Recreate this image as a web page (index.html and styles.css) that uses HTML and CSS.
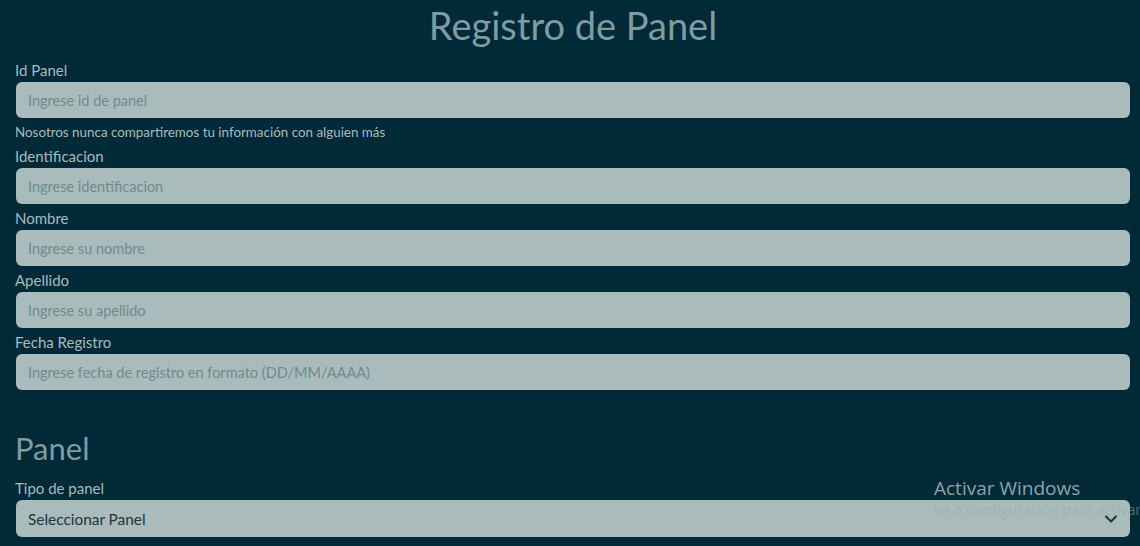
FILE: index.html
```html
<!DOCTYPE html>
<html lang="es">
<head>
<meta charset="utf-8">
<title>Registro de Panel</title>
<link rel="stylesheet" href="styles.css">
</head>
<body>
<main class="container">
  <h1 class="title">Registro de Panel</h1>
  <form class="form">
    <div class="field">
      <label class="label" for="idp">Id Panel</label>
      <input class="control" id="idp" type="text" placeholder="Ingrese id de panel">
      <small class="help">Nosotros nunca compartiremos tu información con alguien más</small>
    </div>
    <div class="field">
      <label class="label" for="ident">Identificacion</label>
      <input class="control" id="ident" type="text" placeholder="Ingrese identificacion">
    </div>
    <div class="field">
      <label class="label" for="nom">Nombre</label>
      <input class="control" id="nom" type="text" placeholder="Ingrese su nombre">
    </div>
    <div class="field">
      <label class="label" for="ape">Apellido</label>
      <input class="control" id="ape" type="text" placeholder="Ingrese su apellido">
    </div>
    <div class="field">
      <label class="label" for="fec">Fecha Registro</label>
      <input class="control" id="fec" type="text" placeholder="Ingrese fecha de registro en formato (DD/MM/AAAA)">
    </div>

    <h2 class="section">Panel</h2>
    <div class="field">
      <label class="label" for="tipo">Tipo de panel</label>
      <div class="select-wrap">
        <select class="control select" id="tipo">
          <option>Seleccionar Panel</option>
        </select>
        <svg class="chevron" width="14" height="10" viewBox="0 0 14 10" aria-hidden="true"><path d="M2 2.5 L7 7.5 L12 2.5" fill="none" stroke="#1d3340" stroke-width="2" stroke-linecap="round" stroke-linejoin="round"/></svg>
      </div>
    </div>
    <div class="field">
      <label class="label" for="marca">Marca</label>
    </div>
  </form>
</main>
<div class="watermark">
  <div class="wm-title">Activar Windows</div>
  <div class="wm-sub">Ve a Configuración para activar Windows.</div>
</div>
</body>
</html>
```
FILE: styles.css
```css
* { box-sizing: border-box; }
html, body {
  margin: 0;
  background: #012a38;
  overflow: hidden;
}
body {
  font-family: Lato, "Open Sans", sans-serif;
  color: #a8bbbc;
  height: 546px;
}
.container {
  padding: 0 10px 0 16px;
}
.title {
  margin: 0;
  height: 56px;
  padding-top: 3px;
  font-weight: 400;
  font-size: 38px;
  line-height: 45px;
  text-align: center;
  color: #7f9ca1;
}
.form {
  display: flex;
  flex-direction: column;
}
.field {
  display: flex;
  flex-direction: column;
}
.label {
  font-size: 15px;
  line-height: 21px;
  padding: 4px 0 1px;
  margin: 0 0 0 -1px;
  height: 26px;
  color: #a9bbbc;
}
.control {
  display: block;
  width: 100%;
  height: 36px;
  border: 0;
  border-radius: 6px;
  background: #a9bcbb;
  padding: 0 12px;
  font-family: inherit;
  font-size: 14.5px;
  color: #1d3340;
  outline: none;
}
.control::placeholder { color: #6d8b90; }
.help {
  font-size: 13.4px;
  line-height: 20px;
  margin: 4px 0 0 -1px;
  color: #a9bbbc;
}
.section {
  margin: 39px 0 0 -1px;
  height: 45px;
  font-weight: 400;
  font-size: 31px;
  line-height: 38px;
  color: #7f9ca1;
}
.select-wrap { position: relative; }
.select {
  appearance: none;
  -webkit-appearance: none;
  height: 37px;
  font-size: 15.4px;
}
.chevron {
  position: absolute;
  right: 12px;
  top: 14px;
}
.watermark {
  position: absolute;
  z-index: 10;
  left: 934px;
  top: 476px;
  white-space: nowrap;
  font-family: "Open Sans", "DejaVu Sans", sans-serif;
  pointer-events: none;
}
.wm-title {
  font-size: 19px;
  line-height: 24px;
  color: #8fa3a6;
}
.wm-sub {
  font-size: 14.3px;
  line-height: 20px;
  color: rgba(150, 170, 172, 0.55);
}
```
